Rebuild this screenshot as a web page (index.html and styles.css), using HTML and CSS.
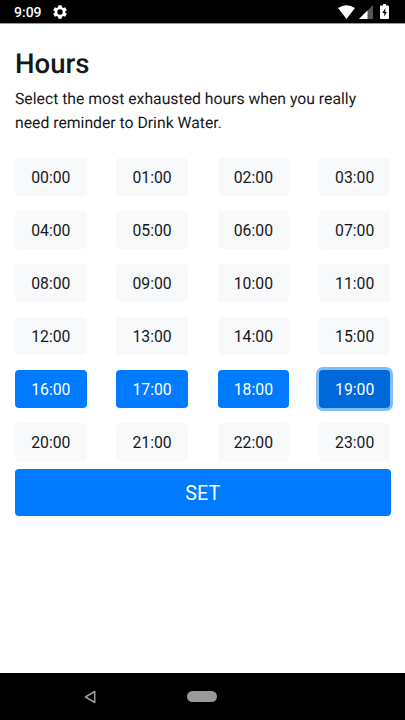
FILE: index.html
```
<!DOCTYPE html>
<html lang="en">
<head>
<meta charset="utf-8">
<title>Hours</title>
<link rel="stylesheet" href="styles.css">
</head>
<body>
<header class="status">
  <span class="clock">9:09</span>
  <svg class="gear" viewBox="0 0 24 24"><path fill="#fff" d="M9.500 2h5l.5 3 2 1.100 2.800-1.100 2.500 4.300L20 11v2l2.300 1.700-2.500 4.300-2.800-1.100-2 1.100-.5 3h-5L9 19l-2-1.100L4.200 19l-2.500-4.300L4 13v-2L1.700 9.300 4.200 5 7 6.100 9 5zM12 8a4 4 0 1 0 0 8 4 4 0 0 0 0-8z"/></svg>
  <svg class="wifi" viewBox="0 0 17 14"><path fill="#fff" d="M0 3Q8.500-2.500 17 3L8.500 14z"/></svg>
  <svg class="signal" viewBox="0 0 14 14"><path fill="#555" d="M14 0v14H0z"/><path fill="#fff" d="M8.500 5.500V14H0z"/></svg>
  <svg class="battery" viewBox="0 0 9 15"><path fill="#fff" d="M3 0h3v1.500h2q1 0 1 1V14q0 1-1 1H1q-1 0-1-1V2.500q0-1 1-1h2z"/><path d="M5.300 4 2.400 9h1.900v3.500L6.800 8H5.300z"/></svg>
</header>
<main>
  <h1>Hours</h1>
  <p>Select the most exhausted hours when you really need reminder to Drink Water.</p>
  <div class="hours">
    <button>00:00</button><button>01:00</button><button>02:00</button><button>03:00</button>
    <button>04:00</button><button>05:00</button><button>06:00</button><button>07:00</button>
    <button>08:00</button><button>09:00</button><button>10:00</button><button>11:00</button>
    <button>12:00</button><button>13:00</button><button>14:00</button><button>15:00</button>
    <button class="on">16:00</button><button class="on">17:00</button><button class="on">18:00</button><button class="on current">19:00</button>
    <button>20:00</button><button>21:00</button><button>22:00</button><button>23:00</button>
  </div>
  <button class="set">SET</button>
</main>
<nav>
  <svg class="back" viewBox="0 0 12 14"><path fill="none" stroke="#999" stroke-width="1.600" stroke-linejoin="round" d="M10.700 1.500v11L1.500 7z"/></svg>
  <span class="pill"></span>
</nav>
</body>
</html>
```
FILE: styles.css
```
* { box-sizing: border-box; }
body { margin: 0; height: 720px; display: flex; flex-direction: column; background: #fff; color: #15181b; font-family: Roboto, sans-serif; text-rendering: geometricPrecision; overflow: hidden; }
.status { height: 24px; background: #000; border-bottom: 1px solid #999; display: flex; align-items: center; padding: 0 16px 0 14px; color: #fff; }
.clock { width: 28px; font-size: 14px; font-weight: 500; line-height: 21px; margin-top: 3px; }
.gear { width: 16px; height: 16px; margin-left: 10px; }
.wifi { width: 17px; height: 14px; margin-left: auto; margin-top: 1px; }
.signal { width: 14px; height: 14px; margin-left: 4px; margin-top: 1px; }
.battery { width: 9px; height: 15px; margin-left: 7px; }
main { flex: 1; padding: 23px 14.500px 0 15px; }
h1 { margin: 0 0 6px; font-size: 27.600px; font-weight: 500; line-height: 34px; }
p { margin: 0 0 24px; font-size: 15.760px; line-height: 23.600px; }
button { font-family: inherit; border: 0; padding: 0; }
.hours { display: grid; grid-template-columns: repeat(4, 71.600px); justify-content: space-between; row-gap: 15.600px; }
.hours button { height: 37.400px; padding-top: 0.800px; border-radius: 4px; background: #f8f9fa; color: #15181b; font-size: 15.760px; }
.hours .on { background: #007bff; color: #fff; }
.hours .current { background: #0069d9; box-shadow: 0 0 0 3px #80bdff; }
.set { display: block; width: 100%; height: 47px; margin-top: 8.800px; padding-top: 1px; border-radius: 4px; background: #007bff; color: #fff; font-size: 19.700px; }
nav { height: 47px; background: #000; display: flex; align-items: center; padding-left: 84px; }
.back { width: 12px; height: 14px; }
.pill { width: 30px; height: 11px; margin-left: 91px; border-radius: 6px; background: #999; }
```
